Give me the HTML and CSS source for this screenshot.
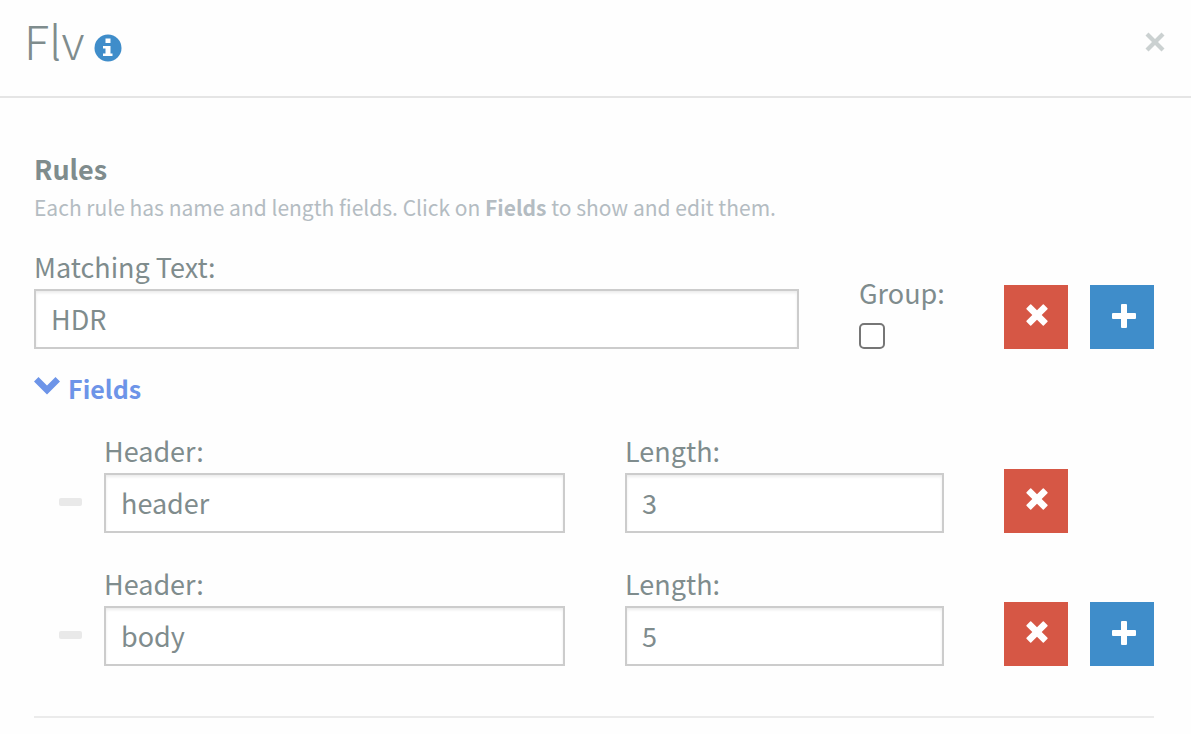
FILE: index.html
```html
<!DOCTYPE html>
<html lang="en">
<head>
    <meta charset="UTF-8">
    <meta name="viewport" content="width=device-width, initial-scale=1.0">
    <title>Flv</title>
    <link rel="stylesheet" href="styles.css">
</head>
<body>

<svg class="sprite" aria-hidden="true">
    <symbol id="icon-remove" viewBox="0 0 22 22">
        <path d="M5.2 0.5 L11 6.3 L16.8 0.5 Q17.3 0.1 17.8 0.5 L21.5 4.2 Q21.9 4.7 21.5 5.2 L15.7 11 L21.5 16.8 Q21.9 17.3 21.5 17.8 L17.8 21.5 Q17.3 21.9 16.8 21.5 L11 15.7 L5.2 21.5 Q4.7 21.9 4.2 21.5 L0.5 17.8 Q0.1 17.3 0.5 16.8 L6.3 11 L0.5 5.2 Q0.1 4.7 0.5 4.2 L4.2 0.5 Q4.7 0.1 5.2 0.5 Z"/>
    </symbol>
    <symbol id="icon-plus" viewBox="0 0 24 24">
        <path d="M10 0h4q1 0 1 1v8h8q1 0 1 1v4q0 1-1 1h-8v8q0 1-1 1h-4q-1 0-1-1v-8H1q-1 0-1-1v-4q0-1 1-1h8V1q0-1 1-1z"/>
    </symbol>
</svg>

<header class="modal-header">
    <h1>Flv</h1>
    <a href="#" class="info" aria-label="Info">
        <svg viewBox="0 0 28 28"><circle cx="14" cy="14" r="13.5"/><path d="M11.5 4.5h5v4.500h-5zM9 12h7.500v7.500h2v2.500H9v-2.500h2.500v-5H9z"/></svg>
    </a>
    <button type="button" class="close" aria-label="Close">
        <svg viewBox="0 0 20 20"><path d="M3.500 0.500 10 7l6.500-6.500 3 3L13 10l6.500 6.500-3 3L10 13l-6.500 6.500-3-3L7 10 0.500 3.500z"/></svg>
    </button>
</header>

<form class="modal-body">
    <h2>Rules</h2>
    <p class="hint">Each rule has name and length fields. Click on <strong>Fields</strong> to show and edit them.</p>

    <div class="rule">
        <div class="control">
            <label for="match">Matching Text:</label>
            <input type="text" id="match" value="HDR">
        </div>
        <div class="control group">
            <label for="group">Group:</label>
            <input type="checkbox" id="group">
        </div>
        <div class="actions">
            <button type="button" class="btn btn-danger" aria-label="Remove rule"><svg><use href="#icon-remove"/></svg></button>
            <button type="button" class="btn btn-primary" aria-label="Add rule"><svg><use href="#icon-plus"/></svg></button>
        </div>
    </div>

    <a href="#fields" class="toggle">
        <svg viewBox="0 0 26 18"><path d="M0 4.500 4.500 0 13 8.500 21.500 0 26 4.500 13 17.500z"/></svg>
        Fields
    </a>

    <div class="fields" id="fields">
        <div class="field">
            <span class="dash"></span>
            <div class="control">
                <label for="header1">Header:</label>
                <input type="text" id="header1" value="header">
            </div>
            <div class="control">
                <label for="length1">Length:</label>
                <input type="text" id="length1" value="3">
            </div>
            <div class="actions">
                <button type="button" class="btn btn-danger" aria-label="Remove field"><svg><use href="#icon-remove"/></svg></button>
            </div>
        </div>
        <div class="field">
            <span class="dash"></span>
            <div class="control">
                <label for="header2">Header:</label>
                <input type="text" id="header2" value="body">
            </div>
            <div class="control">
                <label for="length2">Length:</label>
                <input type="text" id="length2" value="5">
            </div>
            <div class="actions">
                <button type="button" class="btn btn-danger" aria-label="Remove field"><svg><use href="#icon-remove"/></svg></button>
                <button type="button" class="btn btn-primary" aria-label="Add field"><svg><use href="#icon-plus"/></svg></button>
            </div>
        </div>
    </div>
</form>

</body>
</html>
```

FILE: styles.css
```css
* {
    box-sizing: border-box;
}
body {
    margin: 0;
    font-family: "Noto Sans CJK SC", sans-serif;
    font-size: 27px;
    line-height: 40px;
    color: #7f8c8d;
    background-color: #fefefe;
}
h1, h2, p {
    margin: 0;
}
svg {
    display: block;
    fill: currentColor;
}
.sprite {
    display: none;
}
.modal-header {
    display: flex;
    align-items: center;
    padding: 8px 26px 24px 24px;
    border-bottom: 2px solid #e5e5e5;
}
.modal-header h1 {
    font-size: 47px;
    font-weight: 300;
    line-height: 64px;
}
.info {
    margin-left: 9px;
    padding-top: 16px;
}
.info svg {
    width: 28px;
    height: 28px;
}
.info circle {
    fill: #3f8dca;
}
.info path {
    fill: #fff;
}
.close {
    margin-left: auto;
    padding: 4px 0 0;
    border: none;
    background: none;
    color: #cbd1d1;
    cursor: pointer;
}
.close svg {
    width: 20px;
    height: 20px;
}
.modal-body {
    padding: 51px 37px 8px 34px;
}
h2 {
    font-size: 27px;
    font-weight: bold;
}
.hint {
    margin-bottom: 22px;
    font-size: 21px;
    line-height: 36px;
    color: #b4bcc2;
}
.rule, .field {
    display: grid;
    column-gap: 60px;
    align-items: end;
}
.rule {
    grid-template-columns: 1fr 85px 150px;
}
.control {
    display: flex;
    flex-direction: column;
}
label {
    padding-bottom: 2px;
}
input[type="text"] {
    width: 100%;
    height: 60px;
    padding: 0 15px 2px;
    border: 2px solid #cccccc;
    border-radius: 0;
    background-color: #fff;
    box-shadow: inset 0 2px 3px rgba(0, 0, 0, 0.08);
    color: inherit;
    font: inherit;
}
.group {
    gap: 8px;
}
input[type="checkbox"] {
    width: 26px;
    height: 26px;
    margin: 0;
    border: 2px solid #767676;
    border-radius: 5px;
    background-color: #fff;
    appearance: none;
}
input[type="checkbox"]:checked {
    background-color: #3f8dca;
}
.actions {
    display: flex;
    gap: 22px;
}
.btn {
    display: flex;
    align-items: center;
    justify-content: center;
    width: 64px;
    height: 64px;
    padding: 0 0 2px;
    border: none;
    color: #fff;
    cursor: pointer;
}
.btn svg {
    width: 24px;
    height: 24px;
}
.btn-danger {
    padding: 0 0 4px 2px;
    background-color: #d65745;
}
.btn-danger svg {
    width: 22px;
    height: 22px;
}
.btn-primary {
    padding-left: 4px;
    background-color: #3f8dca;
}
.toggle {
    display: inline-flex;
    align-items: center;
    gap: 8px;
    margin-top: 19px;
    color: #6d94e8;
    font-size: 25px;
    font-weight: bold;
    text-decoration: none;
}
.toggle svg {
    width: 26px;
    height: 18px;
    margin-bottom: 4px;
}
.fields {
    display: grid;
    gap: 31px;
    margin-top: 23px;
    padding-bottom: 50px;
    border-bottom: 2px solid #ebebeb;
}
.field {
    grid-template-columns: 10px 461fr 319fr 150px;
}
.dash {
    width: 23px;
    height: 8px;
    margin: 0 0 27px 25px;
    border-radius: 2px;
    background-color: #e9e9e9;
}
```
